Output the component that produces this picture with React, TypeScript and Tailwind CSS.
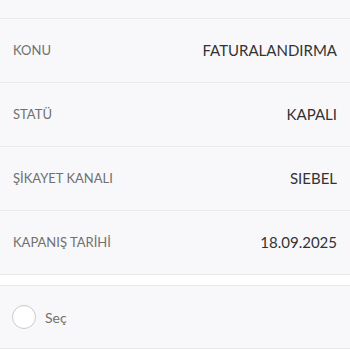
const rows = [
  { label: 'KONU', value: 'FATURALANDIRMA' },
  { label: 'STATÜ', value: 'KAPALI' },
  { label: 'ŞİKAYET KANALI', value: 'SIEBEL' },
  { label: 'KAPANIŞ TARİHİ', value: '18.09.2025' },
];

export default function App() {
  return (
    <div className="w-[350px] h-[350px] overflow-hidden bg-white font-['Lato',sans-serif]">
      <div className="bg-[#f8f8fa]">
        <div className="h-[19px] border-b border-[#ebebee]" />
        {rows.map(row => (
          <div
            key={row.label}
            className="h-[64px] px-[13px] flex items-center justify-between border-b border-[#ebebee]"
          >
            <span className="text-[13px] text-[#707070]">{row.label}</span>
            <span className="text-[15px] text-[#333333]">{row.value}</span>
          </div>
        ))}
      </div>
      <div className="h-[10px] bg-white" />
      <div className="h-[64px] bg-[#f8f8fa] border-y border-[#ebebee] px-[12px] flex items-center gap-[9px]">
        <div className="w-[24px] h-[24px] rounded-full border border-[#c9c9cc] bg-white" />
        <span className="text-[14px] text-[#707070]">Seç</span>
      </div>
    </div>
  );
}
